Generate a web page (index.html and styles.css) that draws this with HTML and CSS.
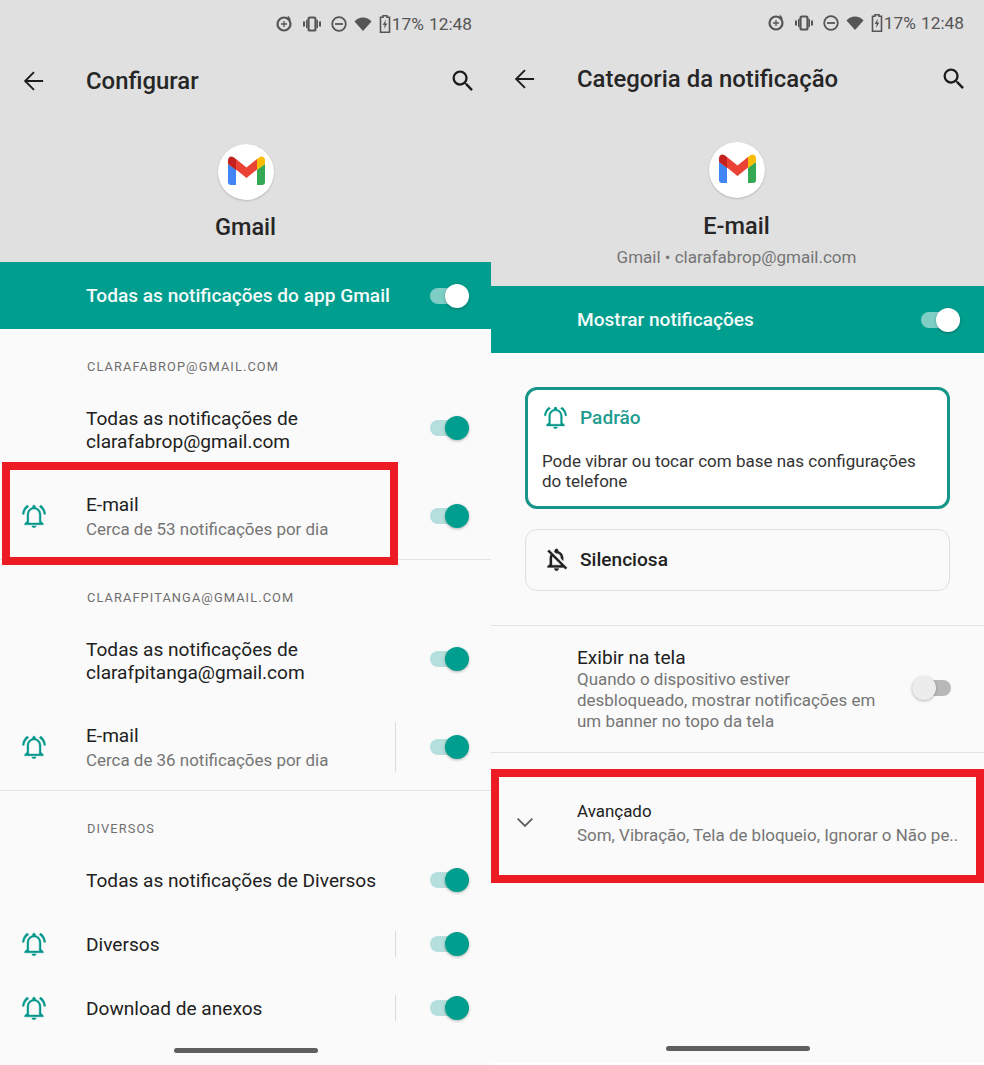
FILE: index.html
```html
<!DOCTYPE html>
<html lang="pt-BR">
<head>
<meta charset="utf-8">
<title>Gmail notificações</title>
<link rel="stylesheet" href="styles.css">
</head>
<body>
<svg class="defs" width="0" height="0" aria-hidden="true">
  <symbol id="bell" viewBox="0 0 24 24"><path d="M7.580 4.080L6.150 2.650C3.750 4.480 2.170 7.300 2.030 10.500h1.500c.15-2.650 1.710-4.970 3.950-6.420zM20.470 10.500h1.500c-.15-3.200-1.730-6.020-4.120-7.850l-1.320 1.430c2.120 1.450 3.790 3.770 3.940 6.420zM18 11c0-3.070-1.640-5.640-4.700-6.320V4c0-.73-.57-1.300-1.300-1.300s-1.300.57-1.300 1.300v.68C7.630 5.360 6 7.920 6 11v5.600l-2 1.900v1h16v-1l-2-1.900V11zm-1.500 7h-9v-7c0-2.900 1.800-5 4.500-5s4.500 2.100 4.500 5v7zm-4.500 4c1 0 1.800-.7 1.800-1.500h-3.600c0 .8.8 1.500 1.800 1.500z"/></symbol>
  <symbol id="logo" viewBox="0 0 56 56">
    <circle cx="28" cy="28" r="28" fill="#fff"/>
    <path fill="#4285f4" d="M10 20l8 5.500V41h-5a3 3 0 0 1-3-3z"/>
    <path fill="#34a853" d="M47 20l-8 5.500V41h5a3 3 0 0 0 3-3z"/>
    <path fill="#ea4335" d="M18 15l10.500 8.500L39 15v10.500l-10.500 8.500L18 25.500z"/>
    <path fill="#c5221f" d="M18 15l-2.500-1.800C13 11.500 10 13.300 10 16.500V20l8 6z"/>
    <path fill="#fbbc04" d="M39 15l2.500-1.800c2.500-1.700 5.500.1 5.500 3.300V20l-8 6z"/>
  </symbol>
  <symbol id="back" viewBox="0 0 24 24"><path d="M19.800 12H4.600M12 4.400L4.400 12l7.600 7.600" fill="none" stroke="currentColor" stroke-width="1.600"/></symbol>
  <symbol id="search" viewBox="0 0 24 24"><path d="M15.500 14h-.79l-.28-.27A6.470 6.470 0 0 0 16 9.500 6.500 6.500 0 1 0 9.500 16c1.610 0 3.090-.59 4.230-1.570l.27.28v.79l5 4.990L20.490 19l-4.990-5zm-6 0C7.010 14 5 11.990 5 9.500S7.010 5 9.500 5 14 7.010 14 9.500 11.990 14 9.500 14z"/></symbol>
  <symbol id="st-sync" viewBox="0 0 18 18"><circle cx="9" cy="9" r="6.500" fill="none" stroke="currentColor" stroke-width="2.200"/><path d="M9 6v6M6 9h6" stroke="currentColor" stroke-width="1.300"/><path d="M13 .5l3 4-4 .5z"/></symbol>
  <symbol id="st-vib" viewBox="0 0 18 18"><rect x="5.500" y="2.500" width="7" height="13" rx="1.500" fill="none" stroke="currentColor" stroke-width="2.200"/><path d="M0 6.500h2v5H0zM16 6.500h2v5h-2zM3 5h1.500v8H3zM13.500 5H15v8h-1.500z"/></symbol>
  <symbol id="st-dnd" viewBox="0 0 18 18"><circle cx="9" cy="9" r="6.800" fill="none" stroke="currentColor" stroke-width="1.800"/><path d="M5 8.100h8v1.800H5z"/></symbol>
  <symbol id="st-wifi" viewBox="0 0 18 18"><path d="M9 16L.5 6.500C2.800 4 5.700 2.500 9 2.500s6.200 1.500 8.500 4z"/></symbol>
  <symbol id="st-batt" viewBox="0 0 12 18"><path d="M4 .8h4v1.500h2.500v15H1.500v-15H4z" fill="none" stroke="currentColor" stroke-width="1.600"/><path d="M6.800 4.500L3.700 10h2l-.6 4 3.200-5.500h-2z"/></symbol>
</svg>

<main class="screens">
  <section class="screen screen-left">
    <header class="head">
      <div class="status">
        <svg class="st st-a"><use href="#st-sync"/></svg>
        <svg class="st st-b"><use href="#st-vib"/></svg>
        <svg class="st st-c"><use href="#st-dnd"/></svg>
        <svg class="st st-d"><use href="#st-wifi"/></svg>
        <svg class="st st-e"><use href="#st-batt"/></svg>
        <span class="pct">17%</span>
        <span class="clock">12:48</span>
      </div>
      <div class="toolbar">
        <svg class="tb-icon"><use href="#back"/></svg>
        <h1 class="title">Configurar</h1>
        <svg class="tb-icon"><use href="#search"/></svg>
      </div>
      <svg class="app-logo"><use href="#logo"/></svg>
      <div class="app-name">Gmail</div>
    </header>
    <div class="band">
      <span class="band-label">Todas as notificações do app Gmail</span>
      <span class="switch on-white"></span>
    </div>

    <div class="section-label">CLARAFABROP@GMAIL.COM</div>
    <div class="row row-85">
      <div class="gutter"></div>
      <div class="text"><div class="t">Todas as notificações de<br>clarafabrop@gmail.com</div></div>
      <span class="switch on"></span>
    </div>
    <div class="row row-88 ruled">
      <div class="gutter"><svg class="bell"><use href="#bell"/></svg></div>
      <div class="text"><div class="t">E-mail</div><div class="s">Cerca de 53 notificações por dia</div></div>
      <span class="sep"></span>
      <span class="switch on"></span>
    </div>

    <div class="section-label">CLARAFPITANGA@GMAIL.COM</div>
    <div class="row row-85">
      <div class="gutter"></div>
      <div class="text"><div class="t">Todas as notificações de<br>clarafpitanga@gmail.com</div></div>
      <span class="switch on"></span>
    </div>
    <div class="row row-88 ruled">
      <div class="gutter"><svg class="bell"><use href="#bell"/></svg></div>
      <div class="text"><div class="t">E-mail</div><div class="s">Cerca de 36 notificações por dia</div></div>
      <span class="sep"></span>
      <span class="switch on"></span>
    </div>

    <div class="section-label section-label-last">DIVERSOS</div>
    <div class="row row-64">
      <div class="gutter"></div>
      <div class="text"><div class="t">Todas as notificações de Diversos</div></div>
      <span class="switch on"></span>
    </div>
    <div class="row row-64">
      <div class="gutter"><svg class="bell"><use href="#bell"/></svg></div>
      <div class="text"><div class="t">Diversos</div></div>
      <span class="sep"></span>
      <span class="switch on"></span>
    </div>
    <div class="row row-64">
      <div class="gutter"><svg class="bell"><use href="#bell"/></svg></div>
      <div class="text"><div class="t">Download de anexos</div></div>
      <span class="sep"></span>
      <span class="switch on"></span>
    </div>

    <span class="pill"></span>
    <span class="redbox redbox-left"></span>
  </section>

  <section class="screen screen-right">
    <header class="head">
      <div class="status">
        <svg class="st st-a"><use href="#st-sync"/></svg>
        <svg class="st st-b"><use href="#st-vib"/></svg>
        <svg class="st st-c"><use href="#st-dnd"/></svg>
        <svg class="st st-d"><use href="#st-wifi"/></svg>
        <svg class="st st-e"><use href="#st-batt"/></svg>
        <span class="pct">17%</span>
        <span class="clock">12:48</span>
      </div>
      <div class="toolbar">
        <svg class="tb-icon"><use href="#back"/></svg>
        <h1 class="title">Categoria da notificação</h1>
        <svg class="tb-icon"><use href="#search"/></svg>
      </div>
      <svg class="app-logo"><use href="#logo"/></svg>
      <div class="app-name">E-mail</div>
      <div class="app-sub">Gmail • clarafabrop@gmail.com</div>
    </header>
    <div class="band">
      <span class="band-label">Mostrar notificações</span>
      <span class="switch on-white"></span>
    </div>

    <div class="options">
      <div class="card card-active">
        <div class="card-head">
          <svg class="card-icon"><use href="#bell"/></svg>
          <span class="card-title">Padrão</span>
        </div>
        <p class="card-desc">Pode vibrar ou tocar com base nas configurações do telefone</p>
      </div>
      <div class="card">
        <div class="card-head">
          <svg class="card-icon" viewBox="0 0 24 24"><path d="M12 22c1.100 0 2-.9 2-2h-4c0 1.100.9 2 2 2zM12 6.500c2.490 0 4 2.020 4 4.500v.1l2 2V11c0-3.070-1.630-5.640-4.500-6.320V4c0-.83-.67-1.500-1.500-1.500s-1.500.67-1.500 1.500v.68c-.24.06-.47.15-.69.23l1.640 1.640c.18-.02.36-.05.55-.05zM5.410 3.350L4 4.760l2.810 2.810C6.290 8.570 6 9.740 6 11v5l-2 2v1h14.240l1.740 1.740 1.410-1.410L5.410 3.350zM16 17H8v-6c0-.68.12-1.320.34-1.900L16 16.760V17z"/></svg>
          <span class="card-title card-title-plain">Silenciosa</span>
        </div>
      </div>
    </div>

    <div class="row row-screen">
      <div class="gutter"></div>
      <div class="text text-narrow">
        <div class="t">Exibir na tela</div>
        <div class="s">Quando o dispositivo estiver desbloqueado, mostrar notificações em um banner no topo da tela</div>
      </div>
      <span class="switch off"></span>
    </div>

    <div class="row row-adv">
      <div class="gutter gutter-chevron"><svg class="chevron" viewBox="0 0 24 24"><path d="M6.500 9.500l5.500 5.500 5.500-5.500"/></svg></div>
      <div class="text">
        <div class="t t-small">Avançado</div>
        <div class="s s-clip">Som, Vibração, Tela de bloqueio, Ignorar o Não pe..</div>
      </div>
    </div>

    <span class="pill"></span>
    <span class="redbox redbox-right"></span>
  </section>
</main>
</body>
</html>
```

FILE: styles.css
```css
* { box-sizing: border-box; }
html, body { margin: 0; padding: 0; background: #fff; }
body { width: 984px; height: 1065px; overflow: hidden; font-family: Roboto, "Liberation Sans", sans-serif; color: #212121; }
.defs { position: absolute; }
.screens { display: flex; align-items: flex-start; }
.screen { position: relative; background: #fafafa; overflow: hidden; }
.screen-left { width: 491px; height: 1065px; }
.screen-right { width: 493px; height: 1063px; }

.head { background: #e0e0e0; display: flex; flex-direction: column; align-items: center; }
.screen-right .head { padding-right: 2px; }
.status { align-self: stretch; display: flex; align-items: center; justify-content: flex-end; height: 46px; padding: 2px 19px 0 0; color: #555; font-size: 17.300px; }
.screen-right .status { height: 44px; padding-right: 18px; }
.st { fill: currentColor; width: 18px; height: 18px; flex: none; }
.st-a { margin-right: 10px; }
.st-b { margin-right: 9px; }
.st-c { margin-right: 6px; }
.st-d { margin-right: 7px; }
.st-e { width: 12px; margin-right: 1px; }
.clock { margin-left: 5px; }

.toolbar { align-self: stretch; height: 70px; display: flex; align-items: center; padding: 0 14px 0 20px; }
.tb-icon { width: 28px; height: 28px; fill: #1c1c1c; color: #1c1c1c; flex: none; }
.title { flex: 1; margin: 0 0 0 38px; font-size: 23.900px; font-weight: 500; color: #262626; }
.app-logo { width: 56px; height: 56px; margin-top: 28px; border-radius: 50%; box-shadow: 0 1px 2px rgba(0,0,0,.18); }
.app-name { margin-top: 12px; height: 30px; line-height: 30px; font-size: 23.500px; font-weight: 500; color: #262626; }
.screen-right .app-name { margin-top: 13px; }
.app-sub { margin-top: 4px; height: 24px; line-height: 24px; font-size: 17px; color: #757575; }
.screen-left .head { padding-bottom: 20px; }
.screen-right .head { padding-bottom: 17px; }

.band { height: 67px; background: #009e8e; color: #fff; display: flex; align-items: center; padding: 0 22px 0 86px; }
.screen-right .band { padding-right: 24px; }
.band-label { flex: 1; font-size: 19.100px; font-weight: 500; color: #f4fbfa; }

.section-label { height: 58px; padding: 28px 0 0 87px; line-height: 20px; font-size: 12.800px; letter-spacing: 1.100px; color: #6e6e6e; }
.section-label-last { height: 57px; }

.row { display: flex; align-items: center; padding-right: 22px; }
.row-85 { height: 85px; }
.row-85 .switch { margin-bottom: 3px; }
.row-88 { height: 88px; }
.row-88 .text { padding-top: 2px; }
.row-64 { height: 64px; }
.ruled { border-bottom: 1.500px solid #e3e3e3; }
.gutter { width: 86px; flex: none; display: flex; padding-left: 19.500px; align-items: center; }
.bell { width: 28px; height: 28px; fill: #00978a; stroke: #00978a; stroke-width: .35; }
.text { flex: 1; min-width: 0; }
.t { font-size: 19.100px; line-height: 23px; color: #212121; }
.s { font-size: 16.950px; line-height: 21.500px; color: #757575; margin-top: 3px; }
.sep { width: 1px; height: 50px; background: #dcdcdc; margin-right: 34px; }
.row-64 .sep { height: 26px; }

.switch { position: relative; display: block; width: 39px; height: 16px; border-radius: 8px; flex: none; }
.switch::after { content: ""; position: absolute; top: -4px; width: 24px; height: 24px; border-radius: 50%; box-shadow: 0 1px 3px rgba(0,0,0,.28); }
.switch.on { background: #b4dfdc; }
.switch.on::after { right: 0; background: #009e8e; }
.switch.on-white { background: #7fcec6; }
.switch.on-white::after { right: 0; background: #fff; }
.switch.off { background: #b8b8b8; }
.switch.off::after { left: 0; background: #ececec; }

.options { padding: 34px; display: flex; flex-direction: column; gap: 20px; border-bottom: 1.500px solid #e3e3e3; }
.card { border: 1.500px solid #dfdfdf; border-radius: 12px; height: 62px; padding: 0 0 2px 17px; display: flex; flex-direction: column; justify-content: center; }
.card-active { height: 122px; background: #fff; border: 3px solid #18958a; padding: 0 14px; justify-content: flex-start; }
.card-head { display: flex; align-items: center; gap: 10px; }
.card-active .card-head { margin-top: 14px; gap: 11px; }
.card-icon { width: 27px; height: 27px; fill: #212121; stroke: #212121; stroke-width: .3; flex: none; }
.card-active .card-icon { fill: #00978a; stroke: #00978a; }
.card-title { font-size: 19.100px; font-weight: 500; color: #1f9c90; }
.card-title-plain { color: #212121; }
.card-desc { margin: 20px 0 0; font-size: 17px; line-height: 20px; color: #333; }

.row-screen { height: 127px; border-bottom: 1.500px solid #e3e3e3; padding-right: 33px; }
.text-narrow { padding-right: 30px; }
.row-screen .text { padding-bottom: 1px; }
.row-screen .s { line-height: 21px; margin-top: 0; }
.row-screen .switch { margin-bottom: 3px; }
.row-adv { height: 64px; margin-top: 39px; }
.gutter-chevron { padding-left: 18px; padding-bottom: 4px; }
.chevron { width: 32px; height: 32px; fill: none; stroke: #616161; stroke-width: 1.400; flex: none; }
.t-small { font-size: 16.950px; line-height: 21px; }
.s-clip { white-space: nowrap; overflow: hidden; margin-top: 3px; }

.pill { position: absolute; left: 174px; bottom: 12px; width: 144px; height: 5px; border-radius: 3px; background: #5f5f5f; }
.screen-right .pill { left: 175px; }
.redbox { position: absolute; border: 8px solid #ed1c24; pointer-events: none; }
.redbox-left { left: 2px; top: 462px; width: 396px; height: 103px; }
.redbox-right { left: 0; top: 769px; width: 493px; height: 114px; }
```
